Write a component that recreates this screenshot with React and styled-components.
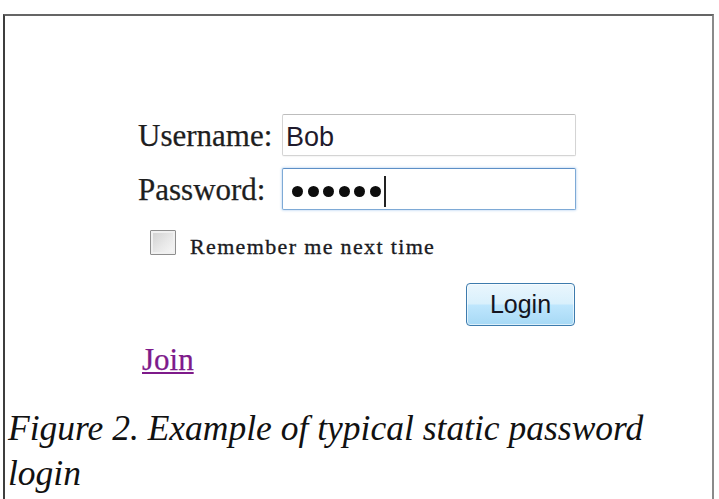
import React from 'react';
import styled, { createGlobalStyle } from 'styled-components';

const GlobalStyle = createGlobalStyle`
  html, body {
    margin: 0;
    padding: 0;
    background: #fff;
    overflow: hidden;
  }
  body {
    font-family: 'Liberation Serif', 'Times New Roman', serif;
    color: #1c1c1c;
  }
`;

const Figure = styled.div`
  box-sizing: border-box;
  width: 711px;
  height: 485px;
  margin: 14px 0 0 3px;
  padding: 0 0 0 3px;
  border-top: 2px solid #656565;
  border-left: 2px solid #3e3e3e;
  border-right: 2px solid #8a8a8a;
  display: flex;
  flex-direction: column;
  overflow: hidden;
`;

const Form = styled.form`
  width: 438px;
  margin: 98px 0 0 130px;
  display: flex;
  flex-direction: column;
`;

const Fields = styled.div`
  display: grid;
  grid-template-columns: 144px 294px;
  row-gap: 12px;
`;

const Label = styled.label`
  font-size: 31px;
  line-height: 40px;
  padding-top: 2px;
  color: #1e1e1e;
  -webkit-text-stroke: 0.25px #1e1e1e;
`;

const fieldBase = `
  box-sizing: border-box;
  width: 294px;
  height: 42px;
  margin: 0;
  border-radius: 2px;
  background: #fff;
`;

const TextInput = styled.input`
  ${fieldBase}
  padding: 4px 0 0 3px;
  border: 1px solid #d4d4d4;
  border-top-color: #bdbdbd;
  box-shadow: 0 1px 1px rgba(0, 0, 0, 0.04);
  font-family: 'Liberation Sans', Arial, sans-serif;
  font-size: 27px;
  color: #1f1a2c;
  outline: none;
`;

const MaskedInput = styled.div`
  ${fieldBase}
  padding: 4px 0 0 9px;
  border: 1px solid #7eaad6;
  border-top-color: #5d8fc6;
  box-shadow: 0 0 2px 1px rgba(157, 196, 235, 0.45);
  display: flex;
  align-items: center;
`;

const Dots = styled.div`
  display: flex;
  gap: 4.6px;
`;

const Dot = styled.span`
  width: 11px;
  height: 11px;
  border-radius: 50%;
  background: #0d0d0d;
`;

const Caret = styled.span`
  width: 2px;
  height: 31px;
  margin: 0 0 0 3px;
  background: #222;
`;

const CheckRow = styled.div`
  display: flex;
  align-items: flex-start;
  margin: 20px 0 0 12px;
`;

const Box = styled.span`
  box-sizing: border-box;
  width: 26px;
  height: 25px;
  border: 1px solid #8e8e8e;
  border-radius: 1px;
  background: linear-gradient(135deg, #cfcfcf 0%, #e8e8e8 55%, #f8f8f8 100%);
  box-shadow: inset 0 0 0 2px #f0f0f0;
`;

const CheckText = styled.span`
  margin-left: 14px;
  padding-top: 4px;
  font-size: 22px;
  line-height: 25px;
  letter-spacing: 1.35px;
  color: #1b1b22;
  -webkit-text-stroke: 0.35px #1b1b22;
`;

const Actions = styled.div`
  display: flex;
  justify-content: flex-end;
  margin: 24px 1px 0 0;
`;

const LoginButton = styled.button`
  box-sizing: border-box;
  width: 109px;
  height: 43px;
  padding: 0;
  border: 1px solid #3d7bad;
  border-radius: 4px;
  background: linear-gradient(
    to bottom,
    #eaf6fd 0%,
    #d9f0fc 48%,
    #bee6fd 52%,
    #a7d9f5 100%
  );
  box-shadow: inset 0 0 0 1px rgba(255, 255, 255, 0.6);
  font-family: 'Liberation Sans', Arial, sans-serif;
  font-size: 25px;
  color: #15151f;
`;

const JoinLink = styled.a`
  align-self: flex-start;
  margin: 16px 0 0 4px;
  font-size: 31px;
  line-height: 36px;
  color: #7e1a8a;
  -webkit-text-stroke: 0.25px #7e1a8a;
  text-decoration: underline;
  text-decoration-thickness: 2px;
  text-underline-offset: 2px;
`;

const Caption = styled.p`
  margin: 28px 0 0 0;
  font-style: italic;
  font-size: 35.5px;
  line-height: 45px;
  color: #111;
`;

export default function App() {
  return (
    <>
      <GlobalStyle />
      <Figure>
        <Form onSubmit={(e) => e.preventDefault()}>
          <Fields>
            <Label htmlFor='username'>Username:</Label>
            <TextInput id='username' defaultValue='Bob' />
            <Label>Password:</Label>
            <MaskedInput>
              <Dots>
                {Array.from({ length: 6 }).map((_, i) => (
                  <Dot key={i} />
                ))}
              </Dots>
              <Caret />
            </MaskedInput>
          </Fields>
          <CheckRow>
            <Box />
            <CheckText>Remember me next time</CheckText>
          </CheckRow>
          <Actions>
            <LoginButton type='submit'>Login</LoginButton>
          </Actions>
          <JoinLink href='#join'>Join</JoinLink>
        </Form>
        <Caption>
          Figure 2. Example of typical static password
          <br />
          login
        </Caption>
      </Figure>
    </>
  );
}
